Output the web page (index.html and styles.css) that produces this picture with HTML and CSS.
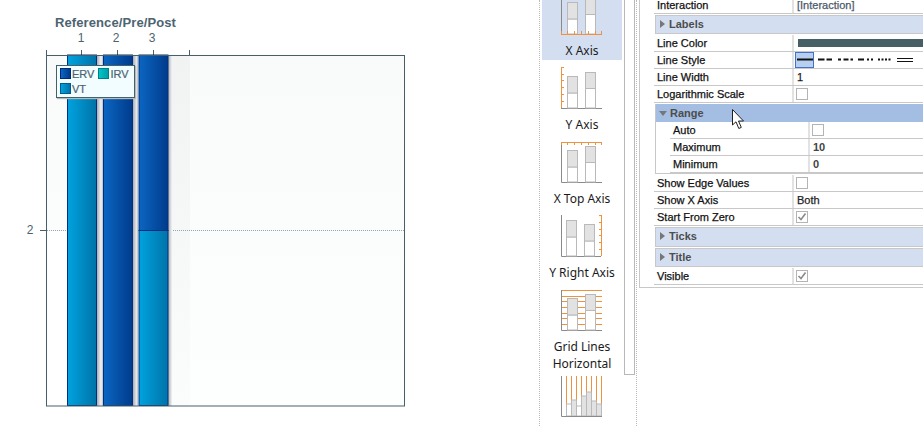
FILE: index.html
```html
<!DOCTYPE html>
<html lang="en">
<head>
<meta charset="utf-8">
<title>Chart axis properties</title>
<link rel="stylesheet" href="styles.css">
</head>
<body>
<svg width="0" height="0" class="defs" aria-hidden="true">
  <defs>
    <linearGradient id="dark"><stop offset="0" stop-color="#0b66c2"/><stop offset="1" stop-color="#003b8c"/></linearGradient>
    <linearGradient id="light"><stop offset="0" stop-color="#00a3df"/><stop offset="1" stop-color="#0073a8"/></linearGradient>
    <linearGradient id="shadow"><stop offset="0" stop-color="#a8adb1"/><stop offset="1" stop-color="#f2f3f4"/></linearGradient>
    <linearGradient id="lshadow"><stop offset="0" stop-color="#f6f7f8"/><stop offset="1" stop-color="#b4bac2"/></linearGradient>
    <linearGradient id="fade" x1="0" y1="0" x2="0" y2="1"><stop offset="0" stop-color="#f1f3f3"/><stop offset="1" stop-color="#fbfcfc"/></linearGradient>
    <linearGradient id="back" x1="0" y1="0" x2="0" y2="1"><stop offset="0" stop-color="#f9fbfb"/><stop offset="1" stop-color="#fdfefe"/></linearGradient>
    <g id="bars">
      <rect class="b-white" x="6.500" y="26" width="10" height="15"/>
      <rect class="b-gray" x="6.500" y="9.500" width="10" height="16.500"/>
      <rect class="b-white" x="24.500" y="21.500" width="10" height="19.500"/>
      <rect class="b-gray" x="24.500" y="5.500" width="10" height="16"/>
    </g>
  </defs>
</svg>

<main class="page">
  <section class="chart">
    <svg class="chart-svg" width="539" height="426" viewBox="0 0 539 426">
      <text class="chart-title" x="115.500" y="27" text-anchor="middle">Reference/Pre/Post</text>
      <text class="tick-label" x="81" y="42" text-anchor="middle">1</text>
      <text class="tick-label" x="116" y="42" text-anchor="middle">2</text>
      <text class="tick-label" x="152" y="42" text-anchor="middle">3</text>
      <text class="tick-label" x="30" y="234" text-anchor="middle">2</text>
      <path class="tick" d="M46.500 50V55M81.500 50V55M117.500 50V55M153.500 50V55M189.500 50V55M40 230.500H46"/>
      <rect x="46" y="55" width="358" height="351" fill="url(#back)"/>
      <rect x="46" y="231" width="22" height="175" fill="#fff"/>
      <rect x="168" y="55" width="22" height="351" fill="url(#fade)"/>
      <path class="grid" d="M47 230.500H404"/>

      <rect x="97" y="55" width="6" height="351" fill="#f0f1f3"/>
      <rect x="133" y="55" width="5" height="351" fill="#f0f1f3"/>
      <rect x="97" y="55" width="4" height="351" fill="url(#shadow)"/>
      <rect x="133" y="55" width="4" height="351" fill="url(#shadow)"/>
      <rect x="168" y="55" width="4" height="351" fill="url(#shadow)"/>
      <rect x="101" y="55" width="2" height="351" fill="url(#lshadow)"/>
      <rect x="136" y="55" width="2" height="351" fill="url(#lshadow)"/>

      <rect class="bar" x="67.500" y="55" width="29" height="350.500" fill="url(#light)"/>
      <rect class="bar" x="103.500" y="55" width="29" height="350.500" fill="url(#dark)"/>
      <rect class="bar" x="139" y="55" width="29" height="175.500" fill="url(#dark)"/>
      <rect class="bar" x="139" y="230.500" width="29" height="175" fill="url(#light)"/>

      <rect class="frame" x="46.500" y="55.500" width="358" height="350.500"/>
    </svg>
    <div class="legend">
      <span class="legend-item"><i class="swatch swatch-erv"></i>ERV</span>
      <span class="legend-item"><i class="swatch swatch-irv"></i>IRV</span>
      <span class="legend-item"><i class="swatch swatch-vt"></i>VT</span>
    </div>
  </section>

  <nav class="gallery">
    <div class="thumbs">
      <div class="thumb selected">
        <svg class="ic" viewBox="0 0 42 42"><path class="ax" d="M.5 0V41"/><use href="#bars"/><path class="or" d="M0 41.500H41M.5 38V41M6.500 38V41M13.500 38V41M20.500 38V41M27.500 38V41M34.500 38V41M40.500 38V41"/></svg>
        <span>X Axis</span>
      </div>
      <div class="thumb">
        <svg class="ic" viewBox="0 0 42 42"><path class="ax" d="M0 41.500H41"/><use href="#bars"/><path class="or" d="M.5 0V41M0 .5H3M0 7.500H3M0 13.500H3M0 20.500H3M0 27.500H3M0 34.500H3"/></svg>
        <span>Y Axis</span>
      </div>
      <div class="thumb">
        <svg class="ic" viewBox="0 0 42 42"><path class="ax" d="M.5 1V41.500H41"/><use href="#bars"/><path class="or" d="M0 1.500H41M.5 1V4M6.500 1V4M13.500 1V4M20.500 1V4M27.500 1V4M34.500 1V4M40.500 1V4"/></svg>
        <span>X Top Axis</span>
      </div>
      <div class="thumb">
        <svg class="ic" viewBox="0 0 42 42"><path class="ax" d="M.5 0V41.500H40"/><rect class="b-white" x="5.500" y="22" width="10" height="19"/><rect class="b-gray" x="5.500" y="5.500" width="10" height="16.500"/><rect class="b-white" x="23.500" y="26" width="10" height="15"/><rect class="b-gray" x="23.500" y="9.500" width="10" height="16.500"/><path class="or" d="M40.500 0V41M38 .5H41M38 7.500H41M38 14.500H41M38 20.500H41M38 27.500H41M38 34.500H41"/></svg>
        <span>Y Right Axis</span>
      </div>
      <div class="thumb two-line">
        <svg class="ic" viewBox="0 0 42 42"><path class="or" d="M0 1.500H41M0 7.500H41M0 12.500H41M0 18.500H41M0 24.500H41M0 29.500H41M0 35.500H41"/><path class="ax" d="M.5 1V41.500H41"/><use href="#bars"/></svg>
        <span>Grid Lines<br>Horizontal</span>
      </div>
      <div class="thumb last">
        <svg class="ic" viewBox="0 0 42 42"><path class="or" d="M5.500 0V28M10.500 0V24M15.500 0V30M20.500 0V20M25.500 0V16M30.500 0V25M35.500 0V28M40.500 0V28"/><rect class="b-white" x="5.500" y="28" width="5" height="12"/><rect class="b-gray" x="10.500" y="24" width="5" height="16"/><rect class="b-white" x="15.500" y="30" width="5" height="10"/><rect class="b-gray" x="20.500" y="20" width="5" height="20"/><rect class="b-gray" x="25.500" y="16" width="5" height="24"/><rect class="b-gray" x="30.500" y="25" width="5" height="15"/><rect class="b-gray" x="35.500" y="28" width="5" height="12"/><path class="ax" d="M.5 0V40.500H41"/></svg>
      </div>
    </div>
    <div class="scrollbar"></div>
  </nav>

  <section class="panel">
    <div class="grid-table">
      <div class="row first"><div class="key">Interaction</div><div class="val link">[Interaction]</div></div>
      <div class="group"><i class="tri"></i>Labels</div>
      <div class="row"><div class="key">Line Color</div><div class="val"><span class="color"></span></div></div>
      <div class="row"><div class="key">Line Style</div><div class="val">
        <svg class="styles" width="126" height="16" viewBox="0 0 126 16">
          <rect class="sel" x="2.500" y=".5" width="18" height="15"/>
          <path class="st" d="M4 7.500H20"/>
          <path class="st" d="M25 7.500H31.500M33.500 7.500H39M45 7.500H48M50.500 7.500H55.500M57.500 7.500H60M65 7.500H71M74 7.500H76M78 7.500H80M85 7.500H87M88.500 7.500H90.500M92 7.500H94M95.500 7.500H97.500"/>
          <path class="st thin" d="M104 6.500H120M104 9.500H120"/>
        </svg>
      </div></div>
      <div class="row"><div class="key">Line Width</div><div class="val">1</div></div>
      <div class="row"><div class="key">Logarithmic Scale</div><div class="val"><i class="check"></i></div></div>
      <div class="range">
        <div class="group hot"><i class="tri down"></i>Range</div>
        <div class="row sub"><div class="key">Auto</div><div class="val"><i class="check"></i></div></div>
        <div class="row sub"><div class="key">Maximum</div><div class="val strong">10</div></div>
        <div class="row sub"><div class="key">Minimum</div><div class="val strong">0</div></div>
      </div>
      <div class="row"><div class="key">Show Edge Values</div><div class="val"><i class="check"></i></div></div>
      <div class="row"><div class="key">Show X Axis</div><div class="val">Both</div></div>
      <div class="row"><div class="key">Start From Zero</div><div class="val"><i class="check on"><svg width="10" height="10" viewBox="0 0 10 10"><path d="M1.500 5L4 7.500L8.500 1.500" fill="none" stroke="#8b8b8b" stroke-width="1.600"/></svg></i></div></div>
      <div class="group tall"><i class="tri"></i>Ticks</div>
      <div class="group"><i class="tri"></i>Title</div>
      <div class="row"><div class="key">Visible</div><div class="val"><i class="check on"><svg width="10" height="10" viewBox="0 0 10 10"><path d="M1.500 5L4 7.500L8.500 1.500" fill="none" stroke="#8b8b8b" stroke-width="1.600"/></svg></i></div></div>
    </div>
  </section>
</main>

<svg class="cursor" width="14" height="21" viewBox="0 0 14 21"><path d="M.5.5V16L4 12.800L6.800 19.500L9.300 18.400L6.500 12H11.500Z" fill="#fff" stroke="#222" stroke-width="1" stroke-linejoin="round"/></svg>
</body>
</html>
```
FILE: styles.css
```css
* { box-sizing: border-box; }
html, body { margin: 0; padding: 0; background: #fff; }
body { width: 923px; height: 426px; overflow: hidden; position: relative; font-family: "Liberation Sans", Arial, sans-serif; font-size: 11px; color: #111; }
.defs { position: absolute; }
.page { display: flex; height: 426px; }

/* chart */
.chart { position: relative; width: 539px; flex: none; }
.chart-svg { display: block; }
.chart-title { font: bold 13px "Liberation Sans", Arial, sans-serif; letter-spacing: .1px; fill: #4c6470; }
.tick-label { font: 12px "Liberation Sans", Arial, sans-serif; fill: #4c6470; }
.tick { stroke: #46606a; stroke-width: 1; fill: none; }
.grid { stroke: #8fa6ab; stroke-width: 1; stroke-dasharray: 1 1; fill: none; }
.bar { stroke: #00307f; stroke-width: 1; }
.frame { fill: none; stroke: #46606a; stroke-width: 1; }
.legend { position: absolute; left: 56px; top: 65px; width: 79px; height: 33px; padding-left: 3px; display: grid; grid-template-columns: auto auto; justify-content: start; column-gap: 4px; grid-auto-rows: 15px; background: #f1fdff; border: 1px solid #46606a; box-shadow: 1px 1px 1px #b5bcbc; color: #4c6470; font-size: 11px; -webkit-text-stroke: .2px; }
.legend-item { display: flex; align-items: center; gap: 1px; height: 15px; }
.swatch { width: 11px; height: 11px; border: 1px solid #00297a; display: block; }
.swatch-erv { background: linear-gradient(90deg, #0b66c2, #003b8c); }
.swatch-irv { background: linear-gradient(90deg, #00c6c8, #00a0a8); border-color: #007f88; }
.swatch-vt { background: linear-gradient(90deg, #00a3df, #0073a8); border-color: #005c90; }

/* gallery */
.gallery { width: 100px; flex: none; display: flex; padding-left: 3px; height: 426px; border-left: 1px dotted #bcbcbc; position: relative; }
.gallery::after { content: ""; position: absolute; left: 96px; top: 0; height: 426px; border-left: 1px dotted #bcbcbc; }
.thumbs { width: 80px; flex: none; height: 426px; overflow: hidden; margin-left: -1px; margin-right: 2px; }
.thumb { display: flex; flex-direction: column; align-items: center; padding: 7px 0 1px; font-family: "Noto Sans", sans-serif; font-size: 12px; line-height: 16px; color: #1a1a1a; text-align: center; }
.thumb:first-child { margin-top: -14px; }
.thumb.selected { background: #d3dff1; }
.thumb span { display: block; margin-top: 8px; }
.thumb.two-line { padding-bottom: 0; line-height: 17px; }
.thumb.two-line span { margin-top: 7px; }
.thumb.last { margin-top: -3px; }
.ic { width: 42px; height: 42px; display: block; flex: none; }
.ax { stroke: #8a8a8a; stroke-width: 1; fill: none; }
.or { stroke: #ee9240; stroke-width: 1; fill: none; }
.b-white { fill: #fff; stroke: #b9b9b9; stroke-width: 1; }
.b-gray { fill: #e2e2e2; stroke: #b9b9b9; stroke-width: 1; }
.scrollbar { width: 11px; height: 375px; border: 1px solid #b8b8b8; border-top: 0; background: #fff; flex: none; }

/* properties */
.panel { flex: 1; height: 288px; border-left: 1px solid #c8c8c8; border-bottom: 1px solid #c8c8c8; padding-left: 14px; overflow: hidden; }
.grid-table { margin-top: -3px; width: 269px; -webkit-text-stroke: .25px; }
.row { display: flex; height: 17px; border-bottom: 1px solid #c8c8c8; line-height: 16px; }
.key { width: 140px; padding-left: 3px; flex: none; border-right: 2px solid #e2e2e2; white-space: nowrap; }
.val { flex: 1; padding-left: 3px; display: flex; align-items: center; color: #222; min-width: 0; }
.link { color: #4c5a6a; }
.strong { font-weight: bold; color: #444; -webkit-text-stroke: 0; }
.group { height: 19px; margin: 0 0 1px 1px; background: #d3dff1; border: 1px solid #c8c8c8; border-width: 1px 0 1px 1px; font-weight: bold; color: #4d4d4d; padding: 0 0 1px 4px; display: flex; align-items: center; -webkit-text-stroke: 0; }
.row + .group { margin-top: 1px; }
.group.tall { height: 20px; padding-bottom: 2px; }
.tri { display: block; width: 0; height: 0; border-left: 5px solid #777; border-top: 4px solid transparent; border-bottom: 4px solid transparent; margin-right: 4px; }
.tri.down { border-top: 5px solid #777; border-left: 4px solid transparent; border-right: 4px solid transparent; border-bottom: 0; margin-right: 3px; }
.range { margin: 1px 0 1px 1px; border-left: 1px solid #c8c8c8; border-bottom: 1px solid #c8c8c8; }
.group.hot { margin: 0; height: 18px; background: #a4bde2; border: 0; padding: 0 0 0 3px; }
.row.sub { margin-left: 14px; }
.check { display: flex; align-items: center; justify-content: center; width: 12px; height: 12px; border: 1px solid #b4b4b4; background: #fff; margin-left: -1px; }
.check svg { display: block; }
.color { display: block; width: 100%; height: 8px; background: #466065; margin-left: 1px; }
.styles { display: block; margin-left: -4px; flex: none; }
.sel { fill: #b7cff0; stroke: #4472c4; stroke-width: 1; }
.st { stroke: #111; stroke-width: 2; fill: none; }
.st.thin { stroke-width: 1; }

.cursor { position: absolute; left: 732px; top: 109px; }
```
